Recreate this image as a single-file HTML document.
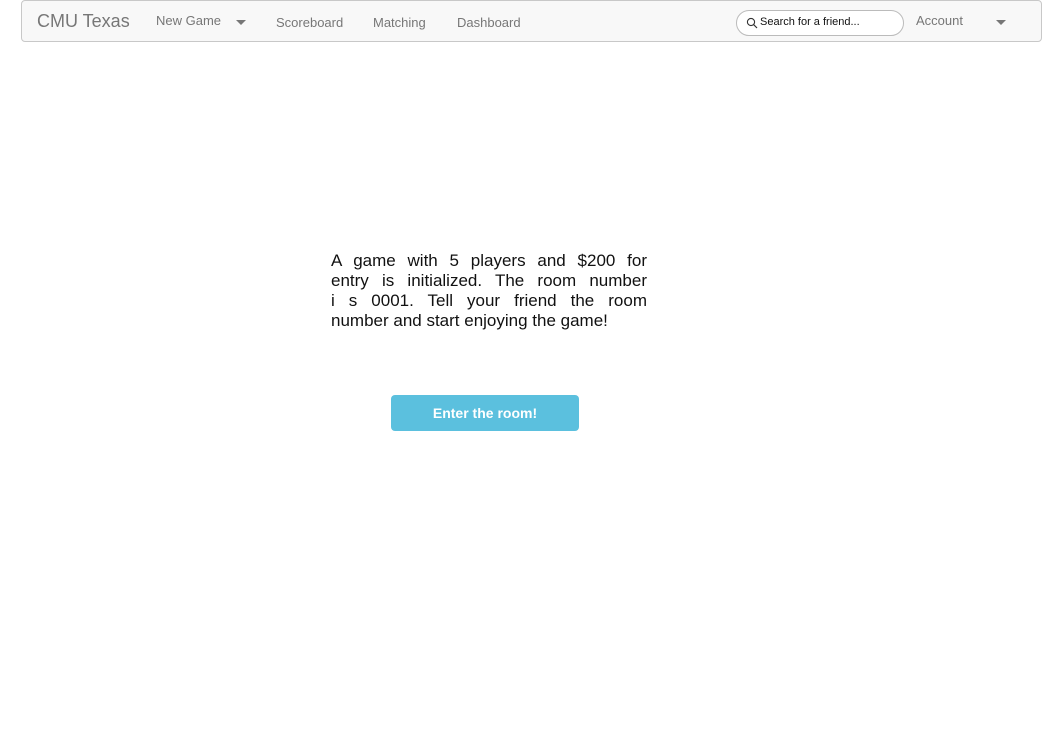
<!DOCTYPE html>
<html><head><style>
body{margin:0;background:#fff;font-family:"Liberation Sans",sans-serif;width:1049px;height:747px;overflow:hidden;position:relative}
.nav{position:absolute;left:21px;top:0;width:1019px;height:40px;background:#f8f8f8;border:1px solid #c8c8c8;border-radius:4px}
.nav span{position:absolute;color:#777;font-size:13px}
.caret{position:absolute;width:0;height:0;border-left:5px solid transparent;border-right:5px solid transparent;border-top:5px solid #777}
.search{position:absolute;left:714px;top:9px;width:166px;height:24px;border:1px solid #bbb;border-radius:13px;background:#fff}
.msg{position:absolute;left:331px;top:251px;width:316px;font-size:17px;line-height:20px;color:#111}
.msg div{text-align:justify;text-align-last:justify;white-space:nowrap}
.msg div.l{text-align-last:left}
.btn{position:absolute;left:391px;top:395px;width:188px;height:36px;background:#5bc0de;border-radius:4px;color:#fff;font-weight:bold;font-size:14px;text-align:center;line-height:36px}
</style></head><body>
<div class="nav">
<span style="left:15px;top:10px;font-size:18px">CMU Texas</span>
<span style="left:134px;top:12px">New Game</span>
<div class="caret" style="left:214px;top:19px"></div>
<span style="left:254px;top:14px">Scoreboard</span>
<span style="left:351px;top:14px">Matching</span>
<span style="left:435px;top:14px">Dashboard</span>
<div class="search"><svg width="12" height="12" style="position:absolute;left:9px;top:6px" viewBox="0 0 12 12"><circle cx="5" cy="5" r="3.6" fill="none" stroke="#333" stroke-width="1.1"/><path d="M7.6 7.6L11 11" stroke="#333" stroke-width="1.2"/></svg><span style="left:23px;top:5px;font-size:11px;color:#111">Search for a friend...</span></div>
<span style="left:894px;top:12px">Account</span>
<div class="caret" style="left:974px;top:19px"></div>
</div>
<div class="msg">
<div>A game with 5 players and $200 for</div>
<div>entry is initialized. The room number</div>
<div>i s 0001. Tell your friend the room</div>
<div class="l">number and start enjoying the game!</div>
</div>
<div class="btn">Enter the room!</div>
</body></html>
